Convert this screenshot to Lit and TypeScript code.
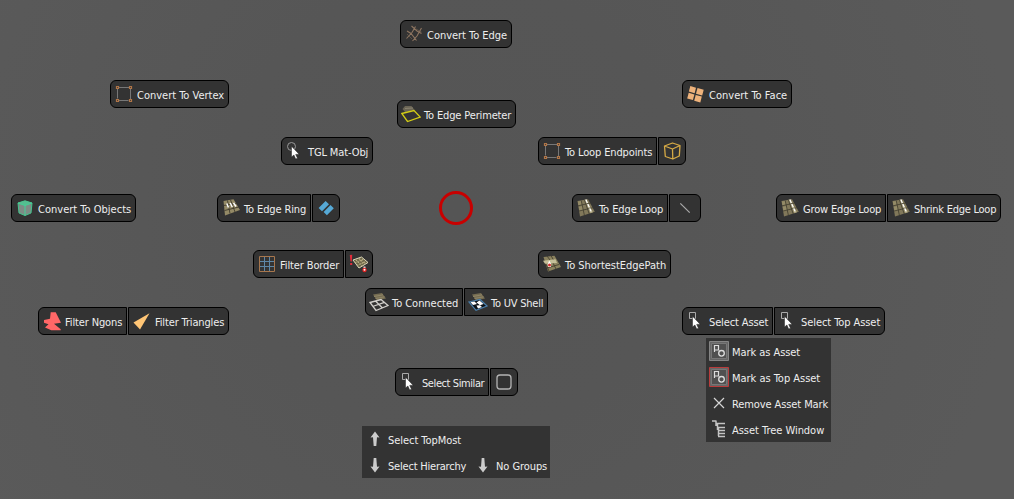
import { LitElement, html, css, svg } from 'lit';
import { customElement, property } from 'lit/decorators.js';

const plane = svg`
  <path d="M1.5 3 12 1.3 18.8 13.8 4 18.6Z" fill="#81785a"/>
  <path d="M1.8 3.5 5 3 6 6.5 2.5 7.5ZM2.8 9 6.5 8 7.5 12 3.4 13.2Z" fill="#948b67"/>
  <path d="M8.3 1.8 10.3 1.6 17 14.3 14.3 15.2Z" fill="#aba27d"/>
  <path d="M5.2 2.5 8.4 17.3M8.4 1.8 13.2 15.8M2 7.8 14.6 5M3 13 17 9.7" stroke="#3f3b2d" stroke-width=".8" fill="none"/>
  <path d="M9.9 1.6 15.7 14.6" stroke="#fff" stroke-width="1.2" stroke-dasharray="3.6 1.1" fill="none"/>`;
const cursor = svg`<path d="M6.5 5.2V16l2.4-2 1.8 4 1.8-.8-1.8-3.8 3.4-.2Z" fill="#fff" stroke="#222" stroke-width=".5"/>`;
const vertex = svg`
  <path d="M5 3.5H15M3.5 5V14.5M5 16.5H14.5M16.5 5V15" stroke="#777" fill="none"/>
  <path d="M2.500 2.500h2v2h-2ZM15.500 2.500h2v2h-2ZM2.500 15.500h2v2h-2ZM15.500 15.500h2v2h-2Z" fill="#333" stroke="#b07547" stroke-width="1.200"/>`;
const asset = (c: string, d: string) => svg`
  <path d="M.5.5H19.500V19.500H.5Z" fill="#666" stroke="${c}"/>
  <path d="M2.500 2.500H17.500V17.500H2.500Z" fill="#505050" stroke="${d}"/>
  <path d="M5.500 4.500h4v4.500h-4ZM5.500 9v2" fill="none" stroke="#ddd" stroke-width="1.200"/>
  <circle cx="12.500" cy="12.300" r="2.800" fill="none" stroke="#ddd" stroke-width="1.300"/>`;
const backTile = svg`<path d="M4 2.500 13 1 17 6.500 8 8.500Z" fill="#756c52"/><path d="M5 4.500 14 2.800M6.500 6.500 15.500 4.800" stroke="#8f8566" fill="none"/>`;

const icons: Record<string, unknown> = {
  edge: svg`<path d="M7.500 2 13 7 17.500 9.500M3 7 7 9.500 12.500 16.500M2.500 14.500 8 8.500 11.500 2.500M8.500 17 13 12 17.500 4" stroke="#8e7560" stroke-width="1.100" fill="none"/><path d="M12 5 17.500 8M3 10 8 15" stroke="#6d5e50" stroke-width=".7"/>`,
  perimeter: svg`<path d="M1.500 5 4 2 10.500 2 13.500 6 4 8Z" fill="#6b6555"/><path d="M4 4.500 12 4" stroke="#8a8370"/><path d="M.8 9.500 13 6.500 19.200 13 6.500 17.500Z" fill="none" stroke="#d3cd16" stroke-width="1.300"/>`,
  vertex,
  face: svg`<g fill="#eeb27b"><path d="m4.300 2 5.700 1.700-1.400 5.500-5.700-1.700Z"/><path d="m11.500 4.100 6.200 1.700-1.500 5.700-6.200-1.700Z"/><path d="m2.700 8.800 5.700 1.600-1.500 5.700-5.700-1.600Z"/><path d="m9.700 10.900 6.100 1.700-1.500 5.800-6.100-1.700Z"/></g>`,
  lasso: svg`<circle cx="6.500" cy="5.500" r="4" fill="none" stroke="#999" stroke-width="1"/>${cursor}`,
  select: svg`<path d="M3.500 1.500h6v6h-6Z" fill="none" stroke="#aaa"/>${cursor}`,
  cube: svg`<path d="M2.500 5 10.500 2 18 4.500 17.300 15 10.800 18 3.300 15.500ZM2.500 5 10.500 8 18 4.500M10.500 8 10.800 18" fill="none" stroke="#d6aa46" stroke-width="1.300" stroke-linejoin="round"/>`,
  object: svg`<path d="M3 5 10 2.800 17 5 16 15 10 17.500 4 15Z" fill="#7e8c86" stroke="#43c58d"/><path d="M3 5 10 2.800 17 5 10 7.500Z" fill="#55bd90"/><path d="M3 5 10 7.500 17 5M10 7.500V17.500" fill="none" stroke="#43d196"/>`,
  plane,
  ring: svg`
    <path d="M2.500 3 12.500 1.200 19 12 4 17.500Z" fill="#948a66"/>
    <path d="M2.700 7.500 16 5.500M3.500 12.500 18 9M6.500 2.500 9 15.500M9.500 1.800 14 14" stroke="#3f3b2d" stroke-width=".9" fill="none"/>
    <path d="M5.800 5.500 7.500 9.500M9.200 5 11.300 9M12.500 4.800 15 8.500" stroke="#fff" stroke-width="1.500"/>`,
  parallel: svg`<path d="M2.600 10 9.600 3 13 6.200 6 13.300ZM7.600 14 14.500 7 17.800 10.300 10.900 17.300Z" fill="#56a9d6"/>`,
  grid: svg`<path d="M7.500 3V17M12.500 3V17M3 7.500H17M3 12.500H17" stroke="#5d86a6" fill="none"/><path d="M2.500 2.500h15v15h-15Z" fill="none" stroke="#a7764d"/>`,
  border: svg`<path d="M4 6 12.500 3 19 8.500 10 14Z" fill="#6b6548" stroke="#ded9ba"/><path d="M7 6 13.500 12M10 4.500 16 10M6 9 15 5M8 11.500 17 7.500" stroke="#b8ae83" stroke-width="1.200" stroke-dasharray="1.500 1"/><path d="M.8 1 3.200.8 2.800 7.500H1.500ZM1.200 9h2v2h-2Z" fill="#e32d3b"/><path d="M15.500 12.500v3" stroke="#f4dddd" stroke-width="2"/><circle cx="15.500" cy="16" r="2.200" fill="#d22"/><circle cx="15.500" cy="15.800" r="1" fill="#fff"/>`,
  line: svg`<path d="M5.300 5.300 14.700 14.700" stroke="#aaa" stroke-width="1.200"/>`,
  path: svg`<path d="M1.500 3 12.500 1.800 19 13 6 17.500Z" fill="#8b825e"/><path d="M5 2 8 6M9 1.500 12 7M3 8 7 17M11 9 14 15M5 14 17 10.500" stroke="#454030" stroke-width=".9"/><path d="M1 6.800 13.500 5.300 15 9 3 9.800Z" fill="#c5bf99"/><path d="M7.200 6.500 9.200 10 8.800 13 6.200 13 5.700 10.500Z" fill="#fff"/><circle cx="7.500" cy="11" r="1.500" fill="#d42c2c"/>`,
  connected: svg`${backTile}<path d="M1 10.500 12 7.500 19 13.500 7 18.500ZM6.500 9 13.500 16M3.500 14.500 15.500 10.300" fill="none" stroke="#d2d0cc" stroke-width="1.300"/>`,
  uv: svg`${backTile}<path d="M1 10 12 7.500 19 14 8 18.300Z" fill="#0b1117" stroke="#4b80ad" stroke-width="1.200"/><path d="M2.500 10.300 6.500 9.500 9 12 5 13ZM11.500 8.500 15.500 12 12 13.300 8.500 10.500ZM8.500 13.500 12 13.300 14 15 10 16.500Z" fill="#fff"/>`,
  ngon: svg`<path d="M8.700 1.300H13.700L19 11.700 12 12.700 18.700 18.300V19.200H9.300L3 16.500 6.500 13.300 2 11.800V9L8 7.700Z" fill="#ff6767"/>`,
  triangle: svg`<path d="M17.500 2.300 8 18.500 1.500 11.500Z" fill="#ffc575"/>`,
  square: svg`<rect x="3" y="3" width="14" height="14" rx="3" fill="none" stroke="#b5b5b5" stroke-width="1.300"/>`,
  up: svg`<path d="M10 2.500 14.500 8.500 12 8.200 11.300 17H8.700L8 8.200 5.500 8.500Z" fill="#ccc"/>`,
  down: svg`<path d="M10 17.500 14.500 11.500 12 11.800 11.300 3H8.700L8 11.800 5.500 11.500Z" fill="#ccc"/>`,
  asset: asset('#858585', '#777'),
  topAsset: asset('#b93c3c', '#777'),
  remove: svg`<path d="M5 5 15 15M15 5 5 15" stroke="#d5d5d5" stroke-width="1.200"/>`,
  tree: svg`<path d="M3 2H7.500M7 2V7M7 4.500H16M8.500 5V11M8 8.500H16M9.500 9V17M10 11.500H16M10 14.500H16M9 17.500H16" stroke="#c4c4c4" stroke-width="1.500" fill="none"/>`,
};

/** icon name, label, label width, optional cell width */
type Cell = [string, string?, number?, number?];
interface Group { x: number; y: number; cells: Cell[] }

const groups: Group[] = [
  { x: 400, y: 20, cells: [['edge', 'Convert To Edge', 80]] },
  { x: 110, y: 80, cells: [['vertex', 'Convert To Vertex', 87]] },
  { x: 682, y: 80, cells: [['face', 'Convert To Face', 78]] },
  { x: 397, y: 100, cells: [['perimeter', 'To Edge Perimeter', 87]] },
  { x: 281, y: 137, cells: [['lasso', 'TGL Mat-Obj', 60]] },
  { x: 538, y: 137, cells: [['vertex', 'To Loop Endpoints', 87], ['cube']] },
  { x: 11, y: 194, cells: [['object', 'Convert To Objects', 93]] },
  { x: 217, y: 194, cells: [['ring', 'To Edge Ring', 62], ['parallel']] },
  { x: 572, y: 194, cells: [['plane', 'To Edge Loop', 64], ['line', , , 32]] },
  { x: 776, y: 194, cells: [['plane', 'Grow Edge Loop', 78], ['plane', 'Shrink Edge Loop', 82]] },
  { x: 253, y: 250, cells: [['grid', 'Filter Border', 59], ['border']] },
  { x: 538, y: 250, cells: [['path', 'To ShortestEdgePath', 101]] },
  { x: 365, y: 288, cells: [['connected', 'To Connected', 66], ['uv', 'To UV Shell', 52]] },
  { x: 38, y: 307, cells: [['ngon', 'Filter Ngons', 57], ['triangle', 'Filter Triangles', 69]] },
  { x: 682, y: 307, cells: [['select', 'Select Asset', 59], ['select', 'Select Top Asset', 79]] },
  { x: 395, y: 368, cells: [['select', 'Select Similar', 62], ['square']] },
];

@customElement('menu-label')
class MenuLabel extends LitElement {
  @property() text = '';
  @property({ type: Number }) width = 0;

  static styles = css`
    :host { display: block; white-space: nowrap; overflow: visible; }
    .text { display: inline-block; }
  `;

  updated() {
    const el = this.renderRoot.querySelector<HTMLElement>('.text')!;
    el.style.letterSpacing = '0';
    const natural = el.getBoundingClientRect().width;
    el.style.letterSpacing = `${(this.width + 0.2 - natural) / this.text.length}px`;
  }

  render() {
    return html`<span class="text">${this.text}</span>`;
  }
}

@customElement('app-root')
class AppRoot extends LitElement {
  static styles = css`
    :host {
      display: block; position: relative; width: 1014px; height: 499px; overflow: hidden;
      background: radial-gradient(circle at 456px 208px, #555 0, #565656 230px, #5a5a5a 560px);
      color: #eee; font: 11px/14px "DejaVu Sans Condensed", "DejaVu Sans", sans-serif;
      font-stretch: condensed;
    }
    svg { display: block; width: 20px; height: 20px; flex: none; }
    .group { position: absolute; display: flex; gap: 1px; }
    .cell {
      box-sizing: border-box; height: 28px; padding: 0 3px; gap: 3px;
      display: flex; align-items: center; justify-content: center;
      background: #333; border: 1px solid #000;
    }
    .cell:first-child { border-radius: 6px 0 0 6px; }
    .cell:last-child { border-radius: 0 6px 6px 0; }
    .cell:only-child { border-radius: 6px; }
    .cell menu-label { padding-right: 1px; padding-top: 4px; }
    .origin {
      position: absolute; left: 439px; top: 191px; box-sizing: border-box;
      width: 34px; height: 34px; border: 3px solid #c80000; border-radius: 50%;
    }
    .list { position: absolute; background: #333; }
    .assets { left: 706px; top: 338px; width: 125px; }
    .hierarchy { left: 362px; top: 426px; width: 188px; }
    .row { display: flex; height: 26px; }
    .entry { display: flex; align-items: center; gap: 3px; padding: 0 3px; }
    .entry menu-label { padding-top: 4px; }
    .hierarchy .entry { padding-right: 4px; }
  `;

  icon(name: string) {
    return html`<svg viewBox="0 0 20 20">${icons[name]}</svg>`;
  }

  entry(name: string, text: string, width: number) {
    return html`<div class="entry">${this.icon(name)}<menu-label style="width:${width}px" .text=${text} .width=${width}></menu-label></div>`;
  }

  render() {
    return html`
      ${groups.map((g) => html`
        <div class="group" style="left:${g.x}px;top:${g.y}px">
          ${g.cells.map(([name, text, w = 0, cw]) => html`
            <div class="cell" style="width:${cw ?? (text ? w + 32 : 28)}px">
              ${this.icon(name)}
              ${text ? html`<menu-label style="width:${w}px" .text=${text} .width=${w}></menu-label>` : ''}
            </div>`)}
        </div>`)}
      <div class="origin"></div>
      <div class="list assets">
        <div class="row">${this.entry('asset', 'Mark as Asset', 68)}</div>
        <div class="row">${this.entry('topAsset', 'Mark as Top Asset', 88)}</div>
        <div class="row">${this.entry('remove', 'Remove Asset Mark', 96)}</div>
        <div class="row">${this.entry('tree', 'Asset Tree Window', 92)}</div>
      </div>
      <div class="list hierarchy">
        <div class="row">${this.entry('up', 'Select TopMost', 73)}</div>
        <div class="row">${this.entry('down', 'Select Hierarchy', 78)}${this.entry('down', 'No Groups', 51)}</div>
      </div>`;
  }
}
